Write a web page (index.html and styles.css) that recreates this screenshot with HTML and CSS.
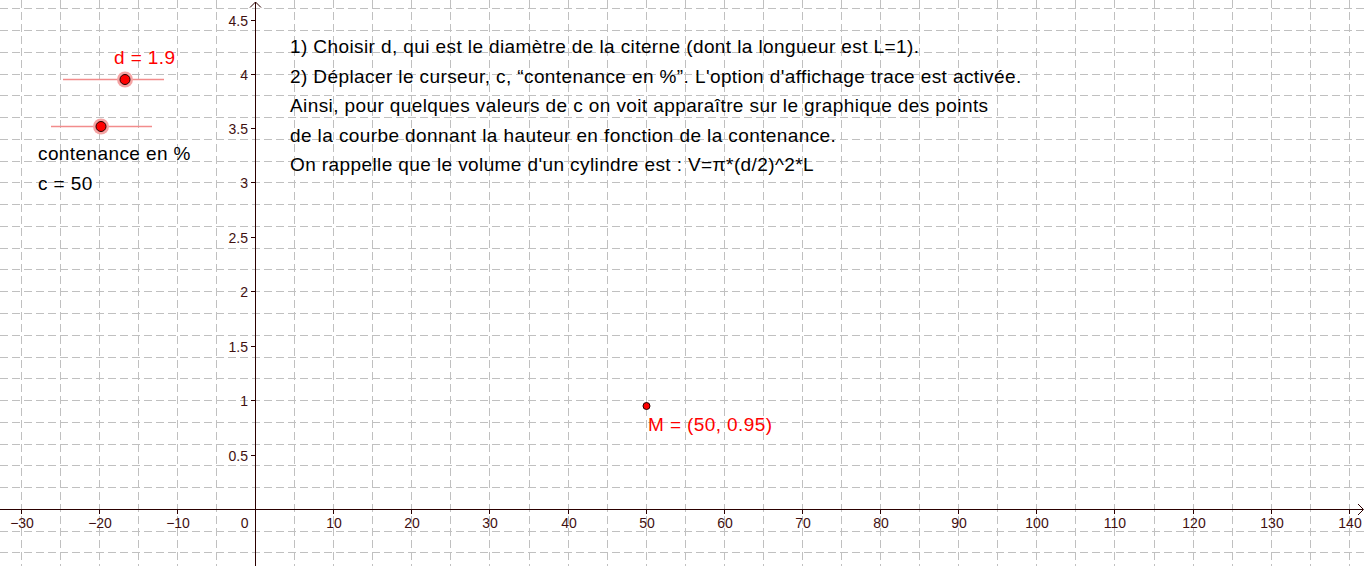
FILE: index.html
```html
<!DOCTYPE html>
<html lang="fr">
<head>
<meta charset="utf-8">
<title>Citerne</title>
<link rel="stylesheet" href="styles.css">
</head>
<body>
<div class="stage">
  <svg class="graph" width="1366" height="566" viewBox="0 0 1366 566" xmlns="http://www.w3.org/2000/svg">
    <g class="grid">
      <line x1="21.5" y1="0" x2="21.5" y2="566"/>
      <line x1="60.5" y1="0" x2="60.5" y2="566"/>
      <line x1="99.5" y1="0" x2="99.5" y2="566"/>
      <line x1="138.5" y1="0" x2="138.5" y2="566"/>
      <line x1="177.5" y1="0" x2="177.5" y2="566"/>
      <line x1="216.5" y1="0" x2="216.5" y2="566"/>
      <line x1="294.5" y1="0" x2="294.5" y2="566"/>
      <line x1="333.5" y1="0" x2="333.5" y2="566"/>
      <line x1="372.5" y1="0" x2="372.5" y2="566"/>
      <line x1="411.5" y1="0" x2="411.5" y2="566"/>
      <line x1="450.5" y1="0" x2="450.5" y2="566"/>
      <line x1="489.5" y1="0" x2="489.5" y2="566"/>
      <line x1="529.5" y1="0" x2="529.5" y2="566"/>
      <line x1="568.5" y1="0" x2="568.5" y2="566"/>
      <line x1="607.5" y1="0" x2="607.5" y2="566"/>
      <line x1="646.5" y1="0" x2="646.5" y2="566"/>
      <line x1="685.5" y1="0" x2="685.5" y2="566"/>
      <line x1="724.5" y1="0" x2="724.5" y2="566"/>
      <line x1="763.5" y1="0" x2="763.5" y2="566"/>
      <line x1="802.5" y1="0" x2="802.5" y2="566"/>
      <line x1="841.5" y1="0" x2="841.5" y2="566"/>
      <line x1="880.5" y1="0" x2="880.5" y2="566"/>
      <line x1="919.5" y1="0" x2="919.5" y2="566"/>
      <line x1="958.5" y1="0" x2="958.5" y2="566"/>
      <line x1="997.5" y1="0" x2="997.5" y2="566"/>
      <line x1="1036.5" y1="0" x2="1036.5" y2="566"/>
      <line x1="1075.5" y1="0" x2="1075.5" y2="566"/>
      <line x1="1114.5" y1="0" x2="1114.5" y2="566"/>
      <line x1="1154.5" y1="0" x2="1154.5" y2="566"/>
      <line x1="1193.5" y1="0" x2="1193.5" y2="566"/>
      <line x1="1232.5" y1="0" x2="1232.5" y2="566"/>
      <line x1="1271.5" y1="0" x2="1271.5" y2="566"/>
      <line x1="1310.5" y1="0" x2="1310.5" y2="566"/>
      <line x1="1349.5" y1="0" x2="1349.5" y2="566"/>

      <line x1="0" y1="8.5" x2="1366" y2="8.5"/>
      <line x1="0" y1="30.5" x2="1366" y2="30.5"/>
      <line x1="0" y1="52.5" x2="1366" y2="52.5"/>
      <line x1="0" y1="74.5" x2="1366" y2="74.5"/>
      <line x1="0" y1="95.5" x2="1366" y2="95.5"/>
      <line x1="0" y1="117.5" x2="1366" y2="117.5"/>
      <line x1="0" y1="139.5" x2="1366" y2="139.5"/>
      <line x1="0" y1="161.5" x2="1366" y2="161.5"/>
      <line x1="0" y1="182.5" x2="1366" y2="182.5"/>
      <line x1="0" y1="204.5" x2="1366" y2="204.5"/>
      <line x1="0" y1="226.5" x2="1366" y2="226.5"/>
      <line x1="0" y1="248.5" x2="1366" y2="248.5"/>
      <line x1="0" y1="269.5" x2="1366" y2="269.5"/>
      <line x1="0" y1="291.5" x2="1366" y2="291.5"/>
      <line x1="0" y1="313.5" x2="1366" y2="313.5"/>
      <line x1="0" y1="335.5" x2="1366" y2="335.5"/>
      <line x1="0" y1="357.5" x2="1366" y2="357.5"/>
      <line x1="0" y1="378.5" x2="1366" y2="378.5"/>
      <line x1="0" y1="400.5" x2="1366" y2="400.5"/>
      <line x1="0" y1="422.5" x2="1366" y2="422.5"/>
      <line x1="0" y1="444.5" x2="1366" y2="444.5"/>
      <line x1="0" y1="465.5" x2="1366" y2="465.5"/>
      <line x1="0" y1="487.5" x2="1366" y2="487.5"/>
      <line x1="0" y1="531.5" x2="1366" y2="531.5"/>
      <line x1="0" y1="552.5" x2="1366" y2="552.5"/>
    </g>

    <g class="axes">
      <line x1="0" y1="509.5" x2="1363" y2="509.5"/>
      <line x1="255.5" y1="2" x2="255.5" y2="566"/>
      <polyline points="1358,504 1363.5,509.5 1358,515"/>
      <polyline points="250,7.5 255.5,2 261,7.5"/>
      <!-- x ticks -->
      <line x1="21.5" y1="509.5" x2="21.5" y2="514"/>
      <line x1="99.5" y1="509.5" x2="99.5" y2="514"/>
      <line x1="177.5" y1="509.5" x2="177.5" y2="514"/>
      <line x1="333.5" y1="509.5" x2="333.5" y2="514"/>
      <line x1="411.5" y1="509.5" x2="411.5" y2="514"/>
      <line x1="489.5" y1="509.5" x2="489.5" y2="514"/>
      <line x1="568.5" y1="509.5" x2="568.5" y2="514"/>
      <line x1="646.5" y1="509.5" x2="646.5" y2="514"/>
      <line x1="724.5" y1="509.5" x2="724.5" y2="514"/>
      <line x1="802.5" y1="509.5" x2="802.5" y2="514"/>
      <line x1="880.5" y1="509.5" x2="880.5" y2="514"/>
      <line x1="958.5" y1="509.5" x2="958.5" y2="514"/>
      <line x1="1036.5" y1="509.5" x2="1036.5" y2="514"/>
      <line x1="1114.5" y1="509.5" x2="1114.5" y2="514"/>
      <line x1="1193.5" y1="509.5" x2="1193.5" y2="514"/>
      <line x1="1271.5" y1="509.5" x2="1271.5" y2="514"/>
      <line x1="1349.5" y1="509.5" x2="1349.5" y2="514"/>
      <!-- y ticks -->
      <line x1="251" y1="455.5" x2="255.5" y2="455.5"/>
      <line x1="251" y1="400.5" x2="255.5" y2="400.5"/>
      <line x1="251" y1="346.5" x2="255.5" y2="346.5"/>
      <line x1="251" y1="291.5" x2="255.5" y2="291.5"/>
      <line x1="251" y1="237.5" x2="255.5" y2="237.5"/>
      <line x1="251" y1="182.5" x2="255.5" y2="182.5"/>
      <line x1="251" y1="128.5" x2="255.5" y2="128.5"/>
      <line x1="251" y1="74.5" x2="255.5" y2="74.5"/>
      <line x1="251" y1="20.5" x2="255.5" y2="20.5"/>
    </g>

    <g class="xlabels">
      <text x="22" y="528">−30</text>
      <text x="100" y="528">−20</text>
      <text x="178" y="528">−10</text>
      <text x="334" y="528">10</text>
      <text x="412" y="528">20</text>
      <text x="490" y="528">30</text>
      <text x="569" y="528">40</text>
      <text x="647" y="528">50</text>
      <text x="725" y="528">60</text>
      <text x="803" y="528">70</text>
      <text x="881" y="528">80</text>
      <text x="959" y="528">90</text>
      <text x="1037" y="528">100</text>
      <text x="1115" y="528">110</text>
      <text x="1194" y="528">120</text>
      <text x="1272" y="528">130</text>
      <text x="1350" y="528">140</text>
    </g>
    <g class="ylabels">
      <text x="248.5" y="528">0</text>
      <text x="248" y="460.5">0.5</text>
      <text x="248" y="405.5">1</text>
      <text x="248" y="351.5">1.5</text>
      <text x="248" y="296.5">2</text>
      <text x="248" y="242.5">2.5</text>
      <text x="248" y="187.5">3</text>
      <text x="248" y="133.5">3.5</text>
      <text x="248" y="79.5">4</text>
      <text x="248" y="25.5">4.5</text>
    </g>

    <!-- slider d -->
    <line class="slider-track" x1="63" y1="79.5" x2="164" y2="79.5"/>
    <circle class="halo" cx="125" cy="79.5" r="8"/>
    <circle class="pt" cx="125" cy="79.5" r="5"/>
    <text class="lbl red" x="114" y="64">d = 1.9</text>

    <!-- slider c -->
    <line class="slider-track" x1="51" y1="126.5" x2="152" y2="126.5"/>
    <circle class="halo" cx="101" cy="126.5" r="8"/>
    <circle class="pt" cx="101" cy="126.5" r="5"/>
    <text class="lbl" x="38" y="160">contenance en %</text>
    <text class="lbl" x="38" y="189.5">c = 50</text>

    <!-- point M -->
    <circle class="pt small" cx="646.5" cy="406" r="3.5"/>
    <text class="lbl red" x="648" y="430.5">M = (50, 0.95)</text>
  </svg>

  <div class="instructions">
    <p>1) Choisir d, qui est le diamètre de la citerne (dont la longueur est L=1).</p>
    <p>2) Déplacer le curseur, c, “contenance en %”. L'option d'affichage trace est activée.</p>
    <p>Ainsi, pour quelques valeurs de c on voit apparaître sur le graphique des points</p>
    <p>de la courbe donnant la hauteur en fonction de la contenance.</p>
    <p>On rappelle que le volume d'un cylindre est : V=π*(d/2)^2*L</p>
  </div>
</div>
</body>
</html>
```

FILE: styles.css
```css
html, body {
  margin: 0;
  padding: 0;
  background: #ffffff;
}

.stage {
  position: relative;
  width: 1366px;
  height: 566px;
  overflow: hidden;
  background: #ffffff;
  font-family: "Liberation Sans", Arial, sans-serif;
}

.graph {
  display: block;
}

.grid line {
  stroke: #c0c0c0;
  stroke-width: 1;
  stroke-dasharray: 8 4;
}

.axes line,
.axes polyline {
  stroke: #2b0000;
  stroke-width: 1;
  fill: none;
}

.xlabels text,
.ylabels text {
  font-family: "Liberation Sans", Arial, sans-serif;
  font-size: 14px;
  fill: #3f1010;
}

.xlabels text {
  text-anchor: middle;
}

.ylabels text {
  text-anchor: end;
}

.slider-track {
  stroke: #f28c8c;
  stroke-width: 1.3;
}

.halo {
  fill: #f5a3a3;
}

.pt {
  fill: #ff0000;
  stroke: #200000;
  stroke-width: 1;
}

.lbl {
  font-family: "Liberation Sans", Arial, sans-serif;
  font-size: 19px;
  letter-spacing: 0.4px;
  fill: #000000;
}

.lbl.red {
  fill: #ff0000;
}

.instructions {
  position: absolute;
  left: 290px;
  top: 32px;
  font-size: 19px;
  letter-spacing: 0.4px;
  line-height: 29.5px;
  color: #000000;
  white-space: nowrap;
}

.instructions p {
  margin: 0;
}
```
